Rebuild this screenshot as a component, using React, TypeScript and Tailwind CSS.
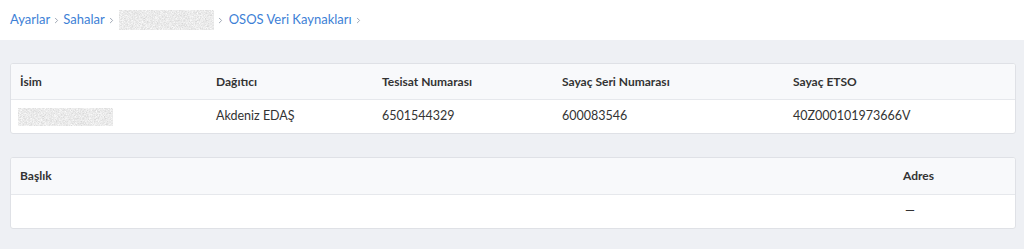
import { ChevronRight } from "lucide-react";

const font = { fontFamily: "Lato, 'Noto Sans', sans-serif" };

function Blur({ id, w, h }: { id: string; w: number; h: number }) {
  return (
    <svg width={w} height={h} className="block">
      <filter id={id}>
        <feTurbulence type="fractalNoise" baseFrequency="1.4" numOctaves="2" seed="5" />
        <feColorMatrix
          type="matrix"
          values="0.45 0 0 0 0.6  0.45 0 0 0 0.6  0.45 0 0 0 0.6  0 0 0 0 1"
        />
      </filter>
      <rect width={w} height={h} filter={`url(#${id})`} />
    </svg>
  );
}

function Crumb({ children }: { children: React.ReactNode }) {
  return (
    <>
      {children}
      <ChevronRight size={9} strokeWidth={2.5} className="mx-[2px] text-gray-400" />
    </>
  );
}

export default function App() {
  return (
    <div className="flex h-[249px] w-[1024px] flex-col bg-[#eef0f4] text-[#333]" style={font}>
      <nav className="flex h-10 items-center bg-white pl-[10px] text-[13px] text-[#3d7fd6]">
        <Crumb>
          <span>Ayarlar</span>
        </Crumb>
        <Crumb>
          <span>Sahalar</span>
        </Crumb>
        <Crumb>
          <span className="ml-[1px]">
            <Blur id="bc" w={95} h={20} />
          </span>
        </Crumb>
        <Crumb>
          <span className="ml-[2px]">OSOS Veri Kaynakları</span>
        </Crumb>
      </nav>

      <div className="flex flex-col gap-[23px] pl-[10px] pr-[8px] pt-[23px]">
        <div className="overflow-hidden rounded-[3px] border border-[#dfe1e6] bg-white">
          <div className="flex h-[36px] items-center border-b border-[#e6e8ec] bg-[#f8f9fb] text-[12px] font-bold">
            <div className="w-[205px] pl-[9px]">İsim</div>
            <div className="w-[166px]">Dağıtıcı</div>
            <div className="w-[180px]">Tesisat Numarası</div>
            <div className="w-[231px]">Sayaç Seri Numarası</div>
            <div>Sayaç ETSO</div>
          </div>
          <div className="flex h-[33px] items-center text-[12.5px]">
            <div className="w-[205px] pl-[7px]">
              <Blur id="nm" w={95} h={18} />
            </div>
            <div className="w-[166px]">Akdeniz EDAŞ</div>
            <div className="w-[180px]">6501544329</div>
            <div className="w-[231px]">600083546</div>
            <div>40Z000101973666V</div>
          </div>
        </div>

        <div className="overflow-hidden rounded-[3px] border border-[#dfe1e6] bg-white">
          <div className="flex h-[37px] items-center justify-between border-b border-[#e6e8ec] bg-[#f8f9fb] text-[12px] font-bold">
            <div className="pl-[9px]">Başlık</div>
            <div className="w-[112px]">Adres</div>
          </div>
          <div className="flex h-[33px] items-center justify-end text-[12.5px]">
            <div className="w-[112px] pl-[2px]">—</div>
          </div>
        </div>
      </div>
    </div>
  );
}
